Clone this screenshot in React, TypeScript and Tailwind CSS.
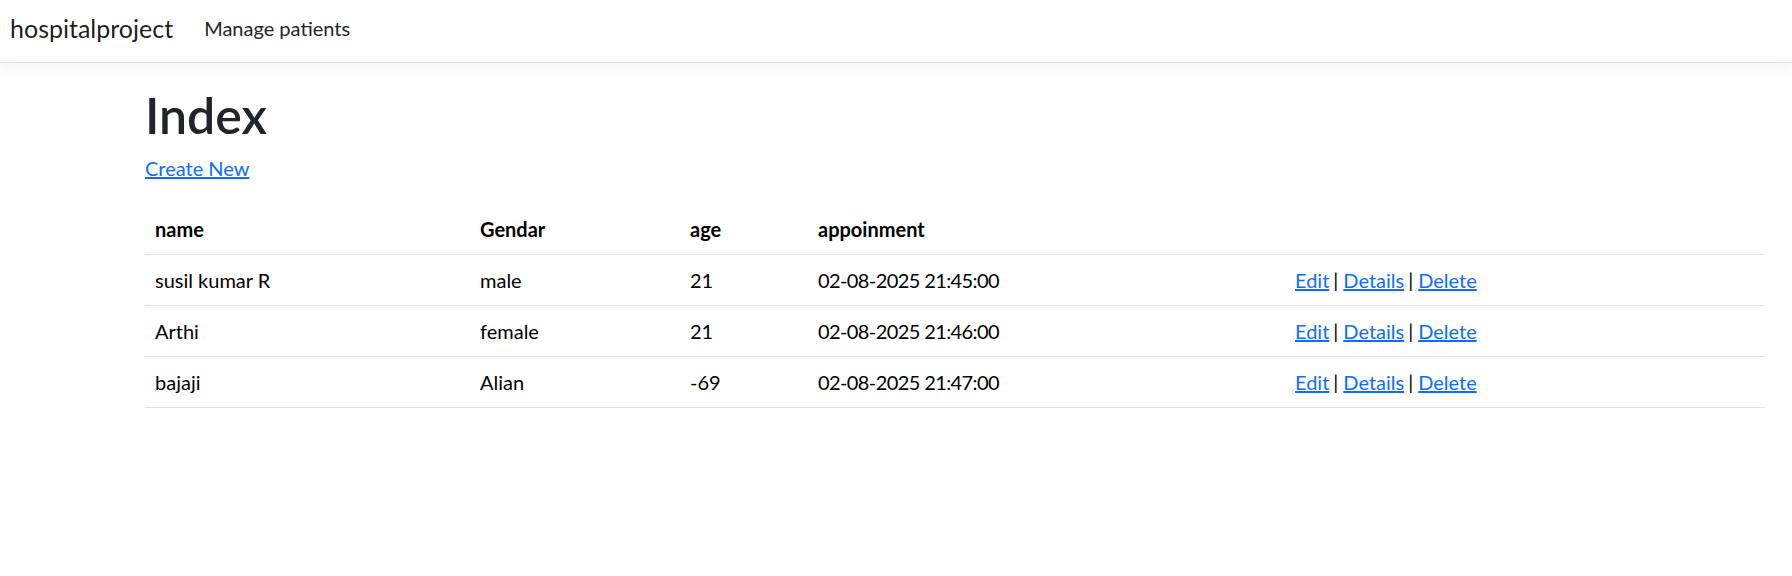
import React from "react";

type Patient = { name: string; gender: string; age: string; appointment: string };

const patients: Patient[] = [
  { name: "susil kumar R", gender: "male", age: "21", appointment: "02-08-2025 21:45:00" },
  { name: "Arthi", gender: "female", age: "21", appointment: "02-08-2025 21:46:00" },
  { name: "bajaji", gender: "Alian", age: "-69", appointment: "02-08-2025 21:47:00" },
];

const cell = "px-[10px] py-[10px] leading-[30px] border-b border-[#dee2e6] text-left align-top";

function Actions() {
  return (
    <span>
      <a href="#" className="text-[#0d6efd] underline">Edit</a>
      <span className="ml-[4px] mr-[5px]">|</span>
      <a href="#" className="text-[#0d6efd] underline">Details</a>
      <span className="ml-[4px] mr-[5px]">|</span>
      <a href="#" className="text-[#0d6efd] underline">Delete</a>
    </span>
  );
}

export default function App() {
  return (
    <div className="min-h-[576px] bg-white font-['Lato','Liberation_Sans',sans-serif] text-[20px] text-[#212529]">
      <header className="flex h-[63px] items-start border-b border-[#dee2e6] bg-white pl-[10px] shadow-[0_5px_15px_rgba(0,0,0,0.05)]">
        <a href="#" className="pt-[10px] text-[25px] leading-[37px] text-[rgba(0,0,0,0.9)]">hospitalproject</a>
        <a href="#" className="ml-[31px] pt-[13px] text-[20px] leading-[30px] text-[#212529]">Manage patients</a>
      </header>
      <main className="pl-[145px] pr-[27px] pt-[20px]">
        <h1 className="pt-[2px] mb-[8px] text-[50px] font-semibold leading-[60px] text-[#212529]">Index</h1>
        <p className="mb-[21px] pt-[1px] leading-[29px]">
          <a href="#" className="text-[#0d6efd] underline">Create New</a>
        </p>
        <table className="w-full border-collapse text-black">
          <thead>
            <tr>
              <th className={`${cell} w-[325px] font-bold`}>name</th>
              <th className={`${cell} w-[210px] font-bold`}>Gendar</th>
              <th className={`${cell} w-[128px] font-bold`}>age</th>
              <th className={`${cell} w-[477px] font-bold`}>appoinment</th>
              <th className={`${cell}`}></th>
            </tr>
          </thead>
          <tbody>
            {patients.map((p) => (
              <tr key={p.name}>
                <td className={cell}>{p.name}</td>
                <td className={cell}>{p.gender}</td>
                <td className={cell}>{p.age}</td>
                <td className={`${cell} tracking-[-0.6px]`}>{p.appointment}</td>
                <td className={cell}>
                  <Actions />
                </td>
              </tr>
            ))}
          </tbody>
        </table>
      </main>
    </div>
  );
}
